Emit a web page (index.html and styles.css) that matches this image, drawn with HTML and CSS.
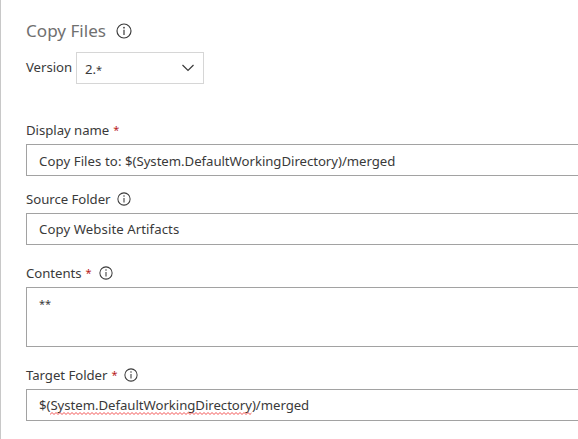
FILE: index.html
```html
<!DOCTYPE html>
<html lang="en">
<head>
<meta charset="utf-8">
<title>Copy Files</title>
<link rel="stylesheet" href="styles.css">
</head>
<body>
<svg class="defs" width="0" height="0">
  <symbol id="info" viewBox="0 0 16 16">
    <circle cx="8" cy="8" r="7" fill="none" stroke="currentColor" stroke-width="1.15"/>
    <path d="M8 6.8V12" stroke="currentColor" stroke-width="1.2"/>
    <circle cx="8" cy="4.7" r=".85" fill="currentColor"/>
  </symbol>
</svg>
<main class="panel">
  <header class="heading"><h1>Copy Files</h1><svg class="info large"><use href="#info"/></svg></header>
  <div class="version">
    <span class="version-label">Version</span>
    <div class="select"><span>2.<span class="star">*</span></span><svg class="chevron" viewBox="0 0 12 8"><path d="M.5 1l5.5 5.5L11.500 1" fill="none" stroke="currentColor" stroke-width="1.2"/></svg></div>
  </div>
  <section class="field display">
    <div class="label"><span>Display name</span><span class="required">*</span></div>
    <div class="input"><span class="lead">Copy Files to: </span><span class="path">$(System.DefaultWorkingDirectory)/merged</span></div>
  </section>
  <section class="field source">
    <div class="label"><span>Source Folder</span><svg class="info"><use href="#info"/></svg></div>
    <div class="input"><span class="lead">Copy Website Artifacts</span></div>
  </section>
  <section class="field contents">
    <div class="label"><span>Contents</span><span class="required">*</span><svg class="info"><use href="#info"/></svg></div>
    <div class="input area"><span class="star">**</span></div>
  </section>
  <section class="field target">
    <div class="label"><span>Target Folder</span><span class="required">*</span><svg class="info"><use href="#info"/></svg></div>
    <div class="input"><span class="path">$(<span class="misspelled">System.DefaultWorkingDirectory<svg class="squiggle"><defs><pattern id="wave" width="4" height="3" patternUnits="userSpaceOnUse"><path d="M-1 1.500L0 2.500L2 .5L4 2.500L5 1.500" fill="none" stroke="#f03c3c" stroke-width=".9"/></pattern></defs><rect width="100%" height="3" fill="url(#wave)"/></svg></span>)/merged</span></div>
  </section>
</main>
</body>
</html>
```
FILE: styles.css
```css
* { box-sizing: border-box; }
body {
  margin: 0;
  background: #fff;
  color: #3a3a3a;
  font: 13.2px/20px "Noto Sans", "Open Sans", sans-serif;
  overflow: hidden;
}
.defs { display: block; }
.panel {
  height: 439px;
  padding: 20px 0 0 25px;
  border-left: 1px solid #c8c8c8;
  white-space: nowrap;
}
.heading { display: flex; align-items: center; height: 22px; }
h1 { margin: 0; color: #707070; font-size: 17.1px; font-weight: 400; line-height: 22px; }
.info { width: 14px; height: 14px; margin-left: 7px; flex: none; }
.info.large { width: 16px; height: 16px; margin-left: 10px; }
.version { display: flex; height: 32px; margin-top: 10px; }
.version-label { width: 50px; line-height: 30px; letter-spacing: -.05px; }
.select {
  display: flex;
  align-items: center;
  justify-content: space-between;
  width: 128px;
  padding: 2px 9px 0 8px;
  border: 1px solid #d6d6d6;
}
.chevron { width: 12px; height: 8px; margin-top: -3px; }
.display { margin-top: 36px; }
.source { margin-top: 13px; }
.contents { margin-top: 18px; }
.target { margin-top: 18px; }
.label { display: flex; align-items: center; height: 20px; letter-spacing: -.04px; }
.required { margin-left: 4px; color: #b81c1c; font-size: 11px; }
.input {
  height: 32px;
  margin-top: 4px;
  padding: 5px 12px;
  border: 1px solid #a2a2a2;
  border-right: 0;
}
.display .input { padding-top: 6px; }
.area { height: 60px; }
.star { font-size: 11px; }
.lead { letter-spacing: .08px; }
.path { letter-spacing: -.04px; }
.misspelled { position: relative; }
.squiggle { position: absolute; left: 0; bottom: -1px; width: 100%; height: 3px; }
```
